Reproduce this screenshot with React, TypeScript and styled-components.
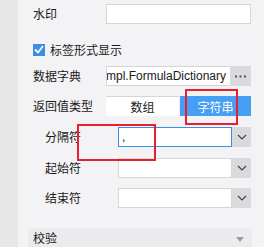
import styled, {createGlobalStyle} from 'styled-components';

const GlobalStyle = createGlobalStyle`
  html, body {
    margin: 0;
    padding: 0;
    background: #f3f3f5;
  }
  body {
    font-family: "Noto Sans CJK SC", "Liberation Sans", sans-serif;
    font-size: 12px;
    color: #1a1a1a;
  }
`;

const Screen = styled.div({
  position: 'relative',
  display: 'flex',
  width: 264,
  height: 247,
  overflow: 'hidden',
  background: '#f3f3f5',
});

const Strip = styled.div({
  width: 18,
  flexShrink: 0,
  background: '#e7e7e8',
});

const Panel = styled.div({
  flex: 1,
  minWidth: 0,
  display: 'flex',
  flexDirection: 'column',
  padding: '0 13px 0 15px',
});

const Row = styled.div<{$mt: number; $indent?: boolean}>(({$mt, $indent}) => ({
  display: 'flex',
  alignItems: 'center',
  height: 20,
  marginTop: $mt,
  paddingLeft: $indent ? 12 : 0,
}));

const Label = styled.div<{$w: number}>(({$w}) => ({
  width: $w,
  flexShrink: 0,
  lineHeight: '20px',
  whiteSpace: 'nowrap',
}));

const TextBox = styled.div<{$focus?: boolean; $open?: boolean}>(({$focus, $open}) => ({
  flex: 1,
  minWidth: 0,
  height: 20,
  boxSizing: 'border-box',
  background: '#fff',
  border: `1px solid ${$focus ? '#3a8ee6' : '#d6d6d8'}`,
  borderRight: $open ? 'none' : undefined,
  display: 'flex',
  alignItems: 'center',
  overflow: 'hidden',
}));

const ClippedText = styled.div({
  flex: 1,
  minWidth: 0,
  display: 'flex',
  justifyContent: 'flex-end',
  overflow: 'hidden',
  whiteSpace: 'nowrap',
  paddingRight: 4,
  fontFamily: '"Liberation Sans", Arial, sans-serif',
  fontSize: 12,
});

const Value = styled.span({
  paddingLeft: 3,
  fontFamily: '"Liberation Sans", Arial, sans-serif',
  fontSize: 12,
  lineHeight: '18px',
});

const SideButton = styled.div<{$w: number}>(({$w}) => ({
  width: $w,
  height: 20,
  flexShrink: 0,
  background: '#dadadd',
  display: 'flex',
  alignItems: 'center',
  justifyContent: 'center',
}));

const CheckRow = styled.div({
  display: 'flex',
  alignItems: 'center',
  height: 20,
  marginTop: 17,
  gap: 5,
});

const CheckBox = styled.div({
  width: 12,
  height: 12,
  background: '#3b8fe2',
  display: 'flex',
  alignItems: 'center',
  justifyContent: 'center',
});

const Segments = styled.div({
  flex: 1,
  minWidth: 0,
  display: 'flex',
  height: 20,
});

const Segment = styled.div<{$active?: boolean}>(({$active}) => ({
  flex: $active ? '0 0 71px' : 1,
  minWidth: 0,
  boxSizing: 'border-box',
  display: 'flex',
  alignItems: 'center',
  justifyContent: 'center',
  background: $active ? '#479ef5' : '#fff',
  color: $active ? '#fff' : '#1a1a1a',
  borderTop: $active ? 'none' : '1px solid #d6d6d8',
  marginRight: $active ? 0 : 1,
}));

const Section = styled.div({
  marginTop: 20,
  marginLeft: -5,
  marginRight: -1,
  height: 30,
  background: '#ebebed',
  display: 'flex',
  alignItems: 'flex-start',
  justifyContent: 'space-between',
  padding: '0 8px 0 5px',
  lineHeight: '20px',
});

const Caret = styled.div({
  marginTop: 9,
  width: 0,
  height: 0,
  borderLeft: '4px solid transparent',
  borderRight: '4px solid transparent',
  borderTop: '5px solid #a0a0a4',
});

const Mark = styled.div({
  position: 'absolute',
  border: '2px solid #e8202b',
  boxSizing: 'border-box',
  pointerEvents: 'none',
});

function Chevron() {
  return (
    <svg width="10" height="6" viewBox="0 0 10 6">
      <path d="M1 1 L5 5 L9 1" fill="none" stroke="#444" strokeWidth="1.2" />
    </svg>
  );
}

function Dots() {
  return (
    <svg width="11" height="3" viewBox="0 0 11 3">
      <rect x="0" y="0.5" width="2" height="2" fill="#555" />
      <rect x="4.5" y="0.5" width="2" height="2" fill="#555" />
      <rect x="9" y="0.5" width="2" height="2" fill="#555" />
    </svg>
  );
}

function Tick() {
  return (
    <svg width="10" height="9" viewBox="0 0 10 9">
      <path d="M1 4.5 L4 7.5 L9 1" fill="none" stroke="#fff" strokeWidth="1.8" />
    </svg>
  );
}

const subRows = [
  {label: '分隔符', value: ',', mt: 11, focus: true},
  {label: '起始符', value: '', mt: 11},
  {label: '结束符', value: '', mt: 10},
];

export default function App() {
  return (
    <>
      <GlobalStyle />
      <Screen>
        <Strip />
        <Panel>
          <Row $mt={4}>
            <Label $w={73}>水印</Label>
            <TextBox />
          </Row>
          <CheckRow>
            <CheckBox>
              <Tick />
            </CheckBox>
            <span>标签形式显示</span>
          </CheckRow>
          <Row $mt={8}>
            <Label $w={73}>数据字典</Label>
            <TextBox $open>
              <ClippedText>com.fr.data.impl.FormulaDictionary</ClippedText>
            </TextBox>
            <SideButton $w={21}>
              <Dots />
            </SideButton>
          </Row>
          <Row $mt={10}>
            <Label $w={73}>返回值类型</Label>
            <Segments>
              <Segment>数组</Segment>
              <Segment $active>字符串</Segment>
            </Segments>
          </Row>
          {subRows.map(r => (
            <Row key={r.label} $mt={r.mt} $indent>
              <Label $w={73}>{r.label}</Label>
              <TextBox $focus={r.focus}>
                <Value>{r.value}</Value>
              </TextBox>
              <SideButton $w={19}>
                <Chevron />
              </SideButton>
            </Row>
          ))}
          <Section>
            <span>校验</span>
            <Caret />
          </Section>
        </Panel>
        <Mark style={{left: 185, top: 89, width: 53, height: 36}} />
        <Mark style={{left: 77, top: 124, width: 79, height: 37}} />
      </Screen>
    </>
  );
}
